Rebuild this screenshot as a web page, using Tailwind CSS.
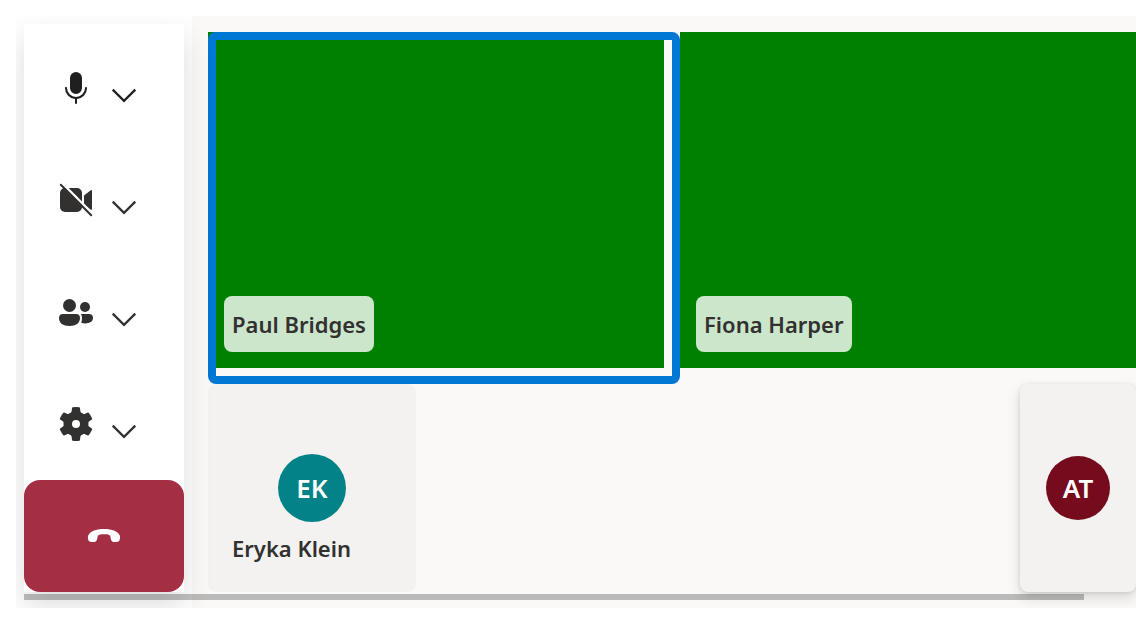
<!DOCTYPE html>
<html lang="en">
<head>
<meta charset="utf-8">
<meta name="viewport" content="width=device-width, initial-scale=1">
<title>Call</title>
<script src="https://cdn.jsdelivr.net/npm/@tailwindcss/browser@4"></script>
</head>
<body class="bg-white font-['Noto_Sans','Open_Sans',sans-serif] text-[#323130]">
<div class="pt-4 pl-4">
  <div class="relative flex overflow-hidden">
    <aside class="relative z-10 shrink-0 p-2">
      <div class="flex w-40 flex-col bg-white pt-2 shadow-[0_13px_29px_rgba(0,0,0,0.14)]">
        <div class="flex h-28 items-center gap-2 pl-8 text-[#201f1e]">
          <button type="button" aria-label="Mute microphone">
            <svg class="size-10" viewBox="0 0 20 20" fill="currentColor"><path d="M10 13a3 3 0 0 0 3-3V5a3 3 0 0 0-6 0v5a3 3 0 0 0 3 3ZM5 9.5c.28 0 .5.22.5.5a4.5 4.5 0 0 0 9 0 .5.5 0 0 1 1 0 5.5 5.5 0 0 1-5 5.48v2.02a.5.5 0 0 1-1 0v-2.02A5.5 5.5 0 0 1 4.500 10c0-.28.22-.5.5-.5Z"/></svg>
          </button>
          <button type="button" aria-label="Microphone options" class="pt-4">
            <svg class="h-6 w-10" viewBox="0 0 40 24" fill="none" stroke="currentColor" stroke-width="2.200"><path d="m8.700 5.600 11.300 11.300 11.300-11.300"/></svg>
          </button>
        </div>
        <div class="flex h-28 items-center gap-2 pl-8">
          <button type="button" aria-label="Turn camera on">
            <svg class="size-10" viewBox="0 0 20 20" fill="currentColor"><path d="M4.500 4H10.500A2.500 2.500 0 0 1 13 6.500V13.500A2.500 2.500 0 0 1 10.500 16H4.500A2.500 2.500 0 0 1 2 13.500V6.500A2.500 2.500 0 0 1 4.500 4ZM14 7.700 17.200 5.200Q18 4.700 18 5.600V14.400Q18 15.300 17.200 14.800L14 12.300Z"/><path d="M3 1.600 18.800 17.400" stroke="#fff" stroke-width="1.300"/><path d="m2.400 2.400 15.200 15.200" stroke="currentColor" stroke-width="1" stroke-linecap="round"/></svg>
          </button>
          <button type="button" aria-label="Camera options" class="pt-4">
            <svg class="h-6 w-10" viewBox="0 0 40 24" fill="none" stroke="currentColor" stroke-width="2.200"><path d="m8.700 5.600 11.300 11.300 11.300-11.300"/></svg>
          </button>
        </div>
        <div class="flex h-28 items-center gap-2 pl-8">
          <button type="button" aria-label="People">
            <svg class="size-10" viewBox="0 0 20 20" fill="currentColor"><circle cx="6.750" cy="6.750" r="3.250"/><circle cx="14.500" cy="7.500" r="2.500"/><path d="M3.500 11h6.500a2 2 0 0 1 2 2c0 2.500-2 4-5.250 4S1.500 15.500 1.500 13a2 2 0 0 1 2-2ZM12.400 11h4.100a2 2 0 0 1 2 2c0 1.700-1.500 2.700-4 2.700-.7 0-1.300-.1-1.900-.3.300-.7.400-1.500.400-2.400 0-.8-.2-1.500-.6-2Z"/></svg>
          </button>
          <button type="button" aria-label="People options" class="pt-4">
            <svg class="h-6 w-10" viewBox="0 0 40 24" fill="none" stroke="currentColor" stroke-width="2.200"><path d="m8.700 5.600 11.300 11.300 11.300-11.300"/></svg>
          </button>
        </div>
        <div class="flex h-28 items-center gap-2 pl-8">
          <button type="button" aria-label="Settings">
            <svg class="size-10" viewBox="0 0 20 20" fill="currentColor">
              <circle cx="10" cy="10" r="4.100" fill="none" stroke="currentColor" stroke-width="4.200"/>
              <path d="M6.800 4.900Q7.700 4.600 7.800 3.800L8 2Q8 1.700 8.400 1.650Q10 1.400 11.600 1.650Q12 1.700 12 2L12.200 3.800Q12.300 4.600 13.200 4.900L12 7H8Z"/>
              <path transform="rotate(60 10 10)" d="M6.800 4.900Q7.700 4.600 7.800 3.800L8 2Q8 1.700 8.400 1.650Q10 1.400 11.600 1.650Q12 1.700 12 2L12.200 3.800Q12.300 4.600 13.200 4.900L12 7H8Z"/>
              <path transform="rotate(120 10 10)" d="M6.800 4.900Q7.700 4.600 7.800 3.800L8 2Q8 1.700 8.400 1.650Q10 1.400 11.600 1.650Q12 1.700 12 2L12.200 3.800Q12.300 4.600 13.200 4.900L12 7H8Z"/>
              <path transform="rotate(180 10 10)" d="M6.800 4.900Q7.700 4.600 7.800 3.800L8 2Q8 1.700 8.400 1.650Q10 1.400 11.600 1.650Q12 1.700 12 2L12.200 3.800Q12.300 4.600 13.200 4.900L12 7H8Z"/>
              <path transform="rotate(240 10 10)" d="M6.800 4.900Q7.700 4.600 7.800 3.800L8 2Q8 1.700 8.400 1.650Q10 1.400 11.600 1.650Q12 1.700 12 2L12.200 3.800Q12.300 4.600 13.200 4.900L12 7H8Z"/>
              <path transform="rotate(300 10 10)" d="M6.800 4.900Q7.700 4.600 7.800 3.800L8 2Q8 1.700 8.400 1.650Q10 1.400 11.600 1.650Q12 1.700 12 2L12.200 3.800Q12.300 4.600 13.200 4.900L12 7H8Z"/>
            </svg>
          </button>
          <button type="button" aria-label="Device options" class="pt-4">
            <svg class="h-6 w-10" viewBox="0 0 40 24" fill="none" stroke="currentColor" stroke-width="2.200"><path d="m8.700 5.600 11.300 11.300 11.300-11.300"/></svg>
          </button>
        </div>
        <button type="button" aria-label="Leave call" class="flex h-28 items-center justify-center rounded-2xl bg-[#a42e43] text-white">
          <svg class="size-10" viewBox="0 0 40 40" fill="currentColor"><path d="M20 13C28 13 34.500 15.500 36 20C36.400 23 35.500 26 32.500 26H30.500C27.500 26 27 24.500 26.400 20.500C26 18.500 23 18.300 20 18.300S14 18.500 13.600 20.500C13 24.500 12.500 26 9.500 26H7.500C4.500 26 3.600 23 4 20C5.500 15.500 12 13 20 13Z"/></svg>
        </button>
      </div>
    </aside>
    <main class="flex min-w-0 flex-1 flex-col gap-4 bg-[#faf9f8] pt-4 pb-4 pl-4">
      <section class="grid grid-cols-2 gap-4">
        <div class="relative h-84 bg-[#008000]">
          <div class="absolute top-0 left-0 -right-4 -bottom-4 rounded-lg border-8 border-[#0078d4]"></div>
          <div class="absolute bottom-4 left-4 rounded-lg bg-white/80 p-2 text-[22px] leading-10 font-semibold whitespace-nowrap">Paul Bridges</div>
        </div>
        <div class="relative h-84 bg-[#008000]">
          <div class="absolute bottom-4 left-4 rounded-lg bg-white/80 p-2 text-[22px] leading-10 font-semibold whitespace-nowrap">Fiona Harper</div>
        </div>
      </section>
      <section class="flex h-52 justify-between">
        <div class="relative flex w-52 items-center justify-center rounded-lg bg-[#f3f2f1]">
          <div class="flex size-17 items-center justify-center rounded-full bg-[#038387] text-[26px] font-semibold text-white">EK</div>
          <div class="absolute bottom-4 left-4 p-2 text-[22px] leading-10 font-semibold whitespace-nowrap">Eryka Klein</div>
        </div>
        <div class="flex w-29 items-center justify-center rounded-lg bg-[#f3f2f1] shadow-[0_6px_14px_rgba(0,0,0,0.132),0_1px_4px_rgba(0,0,0,0.108)]">
          <div class="flex size-16 items-center justify-center rounded-full bg-[#750b1c] text-[26px] font-semibold text-white">AT</div>
        </div>
      </section>
    </main>
    <div class="absolute right-13 bottom-2 left-2 z-20 h-1.5 bg-black/25"></div>
  </div>
</div>
</body>
</html>
